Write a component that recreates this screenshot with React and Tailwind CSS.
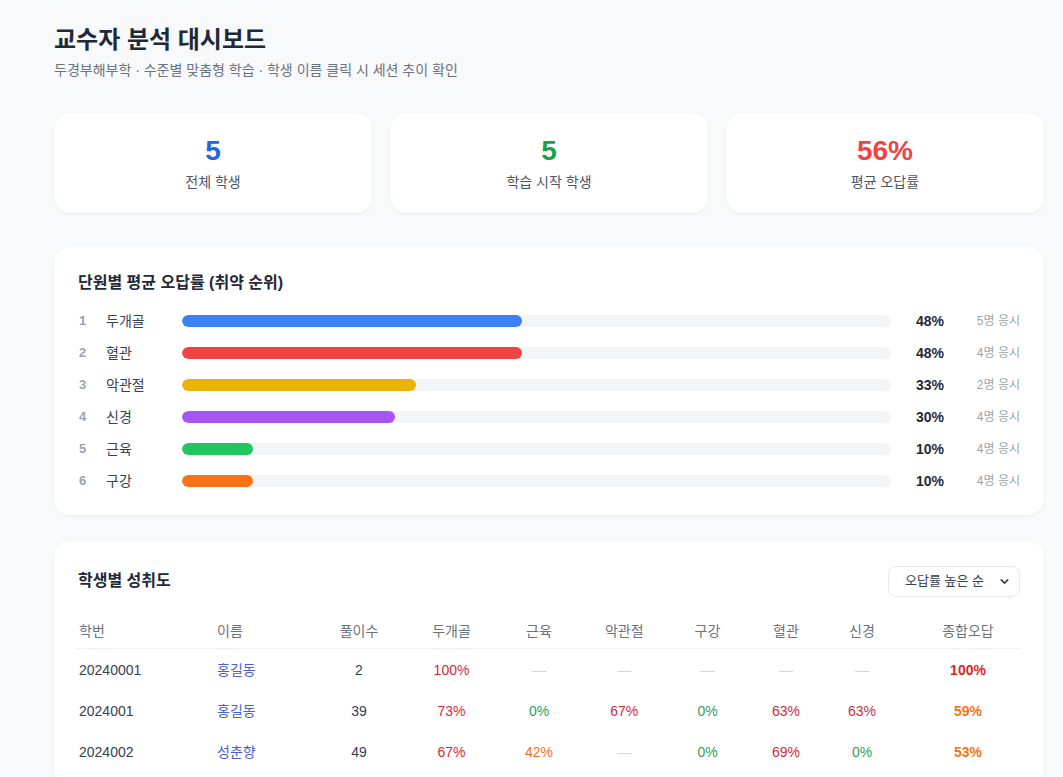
import { ChevronDown } from 'lucide-react'

const FONT = { fontFamily: '"Liberation Sans", "Noto Sans CJK KR", sans-serif' }

const STATS = [
  { value: '5', label: '전체 학생', color: 'text-[#2563eb]' },
  { value: '5', label: '학습 시작 학생', color: 'text-[#16a34a]' },
  { value: '56%', label: '평균 오답률', color: 'text-[#ef4444]' },
]

const UNITS = [
  { name: '두개골', rate: 48, n: 5, bar: 'bg-[#3b82f6]' },
  { name: '혈관', rate: 48, n: 4, bar: 'bg-[#ef4444]' },
  { name: '악관절', rate: 33, n: 2, bar: 'bg-[#eab308]' },
  { name: '신경', rate: 30, n: 4, bar: 'bg-[#a855f7]' },
  { name: '근육', rate: 10, n: 4, bar: 'bg-[#22c55e]' },
  { name: '구강', rate: 10, n: 4, bar: 'bg-[#f97316]' },
]

const COLS = ['두개골', '근육', '악관절', '구강', '혈관', '신경']

const STUDENTS = [
  { id: '20240001', name: '홍길동', solved: 2, scores: [100, null, null, null, null, null], total: 100 },
  { id: '2024001', name: '홍길동', solved: 39, scores: [73, 0, 67, 0, 63, 63], total: 59 },
  { id: '2024002', name: '성춘향', solved: 49, scores: [67, 42, null, 0, 69, 0], total: 53 },
]

function rateColor(v) {
  if (v >= 50) return 'text-[#d6293e]'
  if (v >= 30) return 'text-[#f76b2f]'
  return 'text-[#2f9e5c]'
}

function totalColor(v) {
  if (v >= 60) return 'text-[#dc2626]'
  if (v >= 30) return 'text-[#f97316]'
  return 'text-[#16a34a]'
}

const GRID = 'grid grid-cols-[138px_97.5px_95px_90px_85px_85.5px_81px_76px_76px_121px]'

export default function App() {
  return (
    <div className="min-h-screen bg-[#f8f9fb]" style={FONT}>
      <div className="w-[990px] ml-[54px] pt-6 pb-10">
        {/* Header */}
        <h1 className="text-2xl leading-8 font-bold text-[#1f2937]">교수자 분석 대시보드</h1>
        <p className="mt-1 text-sm leading-5 text-[#6b7280]">
          두경부해부학 · 수준별 맞춤형 학습 · 학생 이름 클릭 시 세션 추이 확인
        </p>

        {/* Stat cards */}
        <div className="mt-[33px] grid grid-cols-3 gap-[18px]">
          {STATS.map(s => (
            <div key={s.label}
              className="h-[100px] rounded-2xl bg-white shadow-[0_1px_3px_rgba(0,0,0,0.06)] flex flex-col items-center pt-[21px]">
              <div className={`text-[28px] leading-[34px] font-bold ${s.color}`}>{s.value}</div>
              <div className="mt-[4px] text-sm leading-5 text-[#4b5563]">{s.label}</div>
            </div>
          ))}
        </div>

        {/* Unit error rates */}
        <section className="mt-[34px] rounded-2xl bg-white shadow-[0_1px_3px_rgba(0,0,0,0.06)] px-6 pt-6 pb-[18px]">
          <h2 className="text-base leading-6 font-bold text-[#1f2937] mb-2.5">단원별 평균 오답률 (취약 순위)</h2>
          {UNITS.map((u, i) => (
            <div key={u.name} className="h-8 flex items-center pl-px">
              <span className="w-[27px] text-[13px] font-bold text-[#9ca3af]">{i + 1}</span>
              <span className="w-[76px] text-sm text-[#374151]">{u.name}</span>
              <div className="flex-1 h-3 rounded-full bg-[#f3f4f6] overflow-hidden">
                <div className={`h-full rounded-full ${u.bar}`} style={{ width: `${u.rate}%` }} />
              </div>
              <span className="w-[53px] text-right text-sm font-bold text-[#1f2937]">{u.rate}%</span>
              <span className="w-[76px] text-right text-xs text-[#9ca3af]">{u.n}명 응시</span>
            </div>
          ))}
        </section>

        {/* Students */}
        <section className="mt-[26px] rounded-2xl bg-white shadow-[0_1px_3px_rgba(0,0,0,0.06)] px-6 pt-6 pb-4">
          <div className="h-8 flex items-center justify-between">
            <h2 className="text-base leading-6 font-bold text-[#1f2937]">학생별 성취도</h2>
            <div className="w-[132px] h-[31px] rounded-lg border border-[#e5e7eb] bg-white flex items-center justify-between pl-4 pr-2 text-[13px] text-[#374151]">
              <span>오답률 높은 순</span>
              <ChevronDown size={13} strokeWidth={3} className="text-[#374151]" />
            </div>
          </div>

          <div className="mt-4 -ml-[2px] w-[945px]">
            <div className={`${GRID} h-9 items-center border-b border-[#f0f1f3] text-sm text-[#6b7280]`}>
              <span className="pl-[3px]">학번</span>
              <span className="pl-[3px]">이름</span>
              <span className="text-center">풀이수</span>
              {COLS.map(c => <span key={c} className="text-center">{c}</span>)}
              <span className="text-center pl-[15px]">종합오답</span>
            </div>
            {STUDENTS.map(s => (
              <div key={s.id} className={`${GRID} h-[41px] items-center text-sm`}>
                <span className="pl-[3px] text-[#374151]">{s.id}</span>
                <span className="pl-[3px] text-[#4a5fd6]">{s.name}</span>
                <span className="text-center text-[#374151]">{s.solved}</span>
                {s.scores.map((v, i) => (
                  <span key={i} className={`text-center ${v === null ? 'text-[#d1d5db]' : rateColor(v)}`}>
                    {v === null ? '—' : `${v}%`}
                  </span>
                ))}
                <span className={`text-center pl-[15px] font-bold ${totalColor(s.total)}`}>{s.total}%</span>
              </div>
            ))}
          </div>
        </section>
      </div>
    </div>
  )
}
